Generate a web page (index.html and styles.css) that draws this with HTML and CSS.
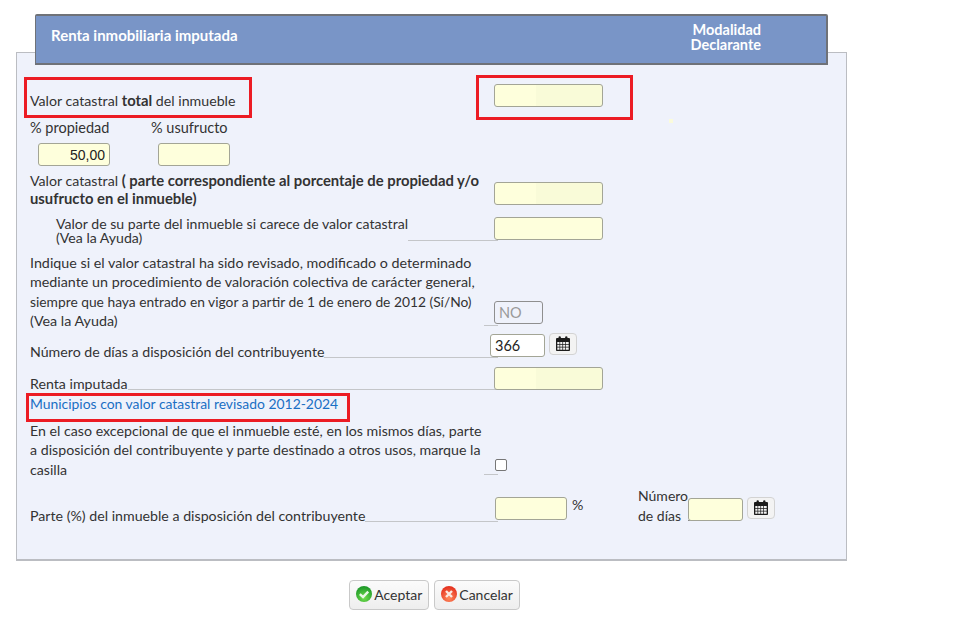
FILE: index.html
```html
<!DOCTYPE html>
<html lang="es">
<head>
<meta charset="utf-8">
<title>Renta inmobiliaria imputada</title>
<link rel="stylesheet" href="styles.css">
</head>
<body>
<div class="page">
  <header class="header">
    <h1 class="title">Renta inmobiliaria imputada</h1>
    <div class="mode">Modalidad<br>Declarante</div>
  </header>
  <main class="panel">
    <div class="mark mark-total"></div>
    <div class="mark mark-input"></div>
    <div class="mark mark-link"></div>
    <div class="speck"></div>

    <div class="row r1">
      <div class="cell"><label class="label">Valor catastral <b>total</b> del inmueble</label></div>
      <input class="inp wide tint top" type="text">
    </div>

    <div class="pair-labels">
      <span class="pair-a">% propiedad</span>
      <span>% usufructo</span>
    </div>
    <div class="pair-inputs">
      <input class="inp short num" type="text" value="50,00">
      <input class="inp short" type="text">
    </div>

    <div class="row r4">
      <div class="cell"><label class="label tight18">Valor catastral <b>( parte correspondiente al porcentaje de propiedad y/o<br>usufructo en el inmueble)</b></label></div>
      <input class="inp wide tint r4-inp" type="text">
    </div>

    <div class="row r5">
      <div class="cell cell-top">
        <label class="label indent tight14">Valor de su parte del inmueble si carece de valor catastral<br>(Vea la Ayuda)</label>
        <span class="lead lead-r5"></span>
      </div>
      <input class="inp wide top" type="text">
    </div>

    <div class="row r6">
      <div class="cell">
        <label class="label para">Indique si el valor catastral ha sido revisado, modificado o determinado<br>mediante un procedimiento de valoración colectiva de carácter general,<br><span class="dated">siempre que haya entrado en vigor a partir de 1 de enero de 2012 (Sí/No)</span><br>(Vea la Ayuda)</label>
        <span class="lead"></span>
      </div>
      <input class="inp no r6-inp" type="text" value="NO">
    </div>

    <div class="row r7">
      <div class="cell">
        <label class="label">Número de días a disposición del contribuyente</label>
        <span class="lead"></span>
      </div>
      <input class="inp days top" type="text" value="366">
      <button class="cal cal-r7" type="button" aria-label="Calendario">
        <svg viewBox="0 0 16 16" width="16" height="16"><use href="#cal-icon"/></svg>
      </button>
    </div>

    <div class="row r8">
      <div class="cell">
        <label class="label">Renta imputada</label>
        <span class="lead"></span>
      </div>
      <input class="inp wide tint top" type="text">
    </div>

    <a class="link" href="#">Municipios con valor catastral revisado 2012-2024</a>

    <div class="row r9">
      <div class="cell">
        <label class="label para">En el caso excepcional de que el inmueble esté, en los mismos días, parte<br>a disposición del contribuyente y parte destinado a otros usos, marque la<br>casilla</label>
        <span class="lead"></span>
      </div>
      <input class="check" type="checkbox">
    </div>

    <div class="row r10">
      <div class="cell">
        <label class="label">Parte (%) del inmueble a disposición del contribuyente</label>
        <span class="lead"></span>
      </div>
      <input class="inp pct r10-inp" type="text">
      <span class="pct-sign">%</span>
      <label class="label dias-label">Número<br>de días</label>
      <span class="stub"></span>
      <input class="inp dias r10-dias" type="text">
      <button class="cal cal-r10" type="button" aria-label="Calendario">
        <svg viewBox="0 0 16 16" width="16" height="16"><use href="#cal-icon"/></svg>
      </button>
    </div>
  </main>
  <footer class="actions">
    <button class="btn" type="button">
      <svg viewBox="0 0 16 16" width="16" height="16">
        <defs><radialGradient id="g" cx="50%" cy="75%" r="70%"><stop offset="0" stop-color="#6fdc4a"/><stop offset="1" stop-color="#1f9a2a"/></radialGradient></defs>
        <circle cx="8" cy="8" r="8" fill="url(#g)"/>
        <path d="M3.800 8.200 7 11l5.200-5.400" fill="none" stroke="#e9f7e4" stroke-width="2.400"/>
      </svg>Aceptar
    </button>
    <button class="btn" type="button">
      <svg viewBox="0 0 16 16" width="16" height="16">
        <defs><radialGradient id="r" cx="50%" cy="75%" r="70%"><stop offset="0" stop-color="#ff8a5c"/><stop offset="1" stop-color="#e5321f"/></radialGradient></defs>
        <circle cx="8" cy="8" r="8" fill="url(#r)"/>
        <path d="M5 5l6 6M11 5l-6 6" fill="none" stroke="#fbe9e2" stroke-width="2.400"/>
      </svg>Cancelar
    </button>
  </footer>
</div>
<svg class="defs" width="0" height="0">
  <symbol id="cal-icon" viewBox="0 0 16 16">
    <path fill="#1c1c1c" d="M1 3.200C1 2.600 1.500 2 2.200 2H3.500V1.500a1.200 1.200 0 0 1 2.400 0V2h4.200V1.500a1.200 1.200 0 0 1 2.400 0V2h1.300c.7 0 1.200.6 1.200 1.200V14c0 .6-.5 1-1.200 1H2.200C1.500 15 1 14.600 1 14z"/>
    <path fill="#f2f2f2" d="M2.300 6h2.200v2H2.300zM5.200 6h2.200v2H5.200zM8.100 6h2.200v2H8.100zM11 6h2.700v2H11zM2.300 8.700h2.200v2H2.300zM5.200 8.700h2.200v2H5.200zM8.100 8.700h2.200v2H8.100zM11 8.700h2.700v2H11zM2.300 11.400h2.200v2.300H2.300zM5.200 11.400h2.200v2.300H5.200zM8.100 11.400h2.200v2.300H8.100zM11 11.400h2.700v2.300H11z"/>
  </symbol>
</svg>
</body>
</html>
```

FILE: styles.css
```css
* { box-sizing: border-box; }
html, body { margin: 0; background: #fff; }
body { font-family: Lato, "Noto Sans", sans-serif; font-size: 14.200px; color: #333; }
b { font-size: 14.800px; line-height: 1; }
.defs { position: absolute; }

.page { width: 847px; padding: 14px 0 0 16px; }

.header {
  position: relative; z-index: 1;
  display: flex; justify-content: space-between; align-items: center;
  width: 793px; height: 51px; margin: 0 0 -13px 19px;
  padding: 0 65px 0 15px;
  background: #7995c7;
  border: 1px solid #6f7278; border-width: 2px 2px 2px 1px;
  border-radius: 2px 2px 0 0;
  color: #fff; font-weight: 700;
}
.title { margin: 0 0 9px; font-size: 15px; font-weight: 700; }
.mode { margin-bottom: 6px; font-size: 14.500px; line-height: 15px; text-align: right; }

.panel {
  position: relative;
  height: 509px; padding: 31px 0 0 13px;
  background: #eff2fb;
  border: 1px solid #bbbdc2;
  border-bottom-width: 2px;
}

.mark { position: absolute; border: 3px solid #ec1c24; }
.mark-total { left: 7px; top: 24px; width: 228px; height: 41px; }
.mark-input { left: 459px; top: 22px; width: 157px; height: 45px; }
.mark-link { left: 9px; top: 340px; width: 324px; height: 29px; }
.speck { position: absolute; left: 652px; top: 66px; width: 4px; height: 4px; background: #fafbdc; }

.row { display: flex; align-items: flex-end; }
.cell { display: flex; align-items: flex-end; flex: none; width: 468px; }
.cell-top { align-items: flex-start; }
.label { display: block; line-height: 20px; white-space: nowrap; }
.lead { flex: 1; margin-bottom: 4px; min-width: 0; border-bottom: 1px solid #c4c6c9; }
.lead-r5 { height: 24px; margin-bottom: 0; }

.inp {
  flex: none; height: 23px; margin: 0; padding: 0 4px;
  border: 1px solid #a3a596; border-radius: 3px;
  background: #feffdc;
  font: 14px "Liberation Sans", sans-serif; color: #222;
  outline: none;
}
.wide { width: 109px; margin-left: -4px; }
.tint { background: linear-gradient(90deg, #feffdc 38%, #f9fbd8 38%); }
.top { align-self: flex-start; }
.short { width: 72px; }
.num { text-align: right; }
.no { width: 49px; margin-left: -4px; background: #eff2fb; border-color: #8f8f8f; font-family: Lato, sans-serif; font-size: 14.500px; color: #999; }
.days { width: 55px; margin-left: -8px; background: #fff; font-family: Lato, sans-serif; font-size: 14.500px; }
.pct { width: 72px; margin-left: -3px; }
.dias { width: 55px; }

.r1 { height: 27px; }

.pair-labels { display: flex; margin-top: 7px; font-size: 14.500px; line-height: 20px; }
.pair-a { width: 121px; }
.pair-inputs { display: flex; gap: 48px; margin: 5px 0 0 8px; }

.r4 { margin-top: 6px; align-items: flex-start; }
.tight18 { line-height: 18px; width: 468px; }
.r4-inp { margin-top: 10px; }

.r5 { margin-top: 9px; align-items: flex-start; }
.indent { margin-left: 26px; }
.tight14 { font-size: 14.100px; line-height: 14px; }

.para { width: 454px; flex: none; line-height: 19.300px; }
.r6 .para { font-size: 14.300px; }
.dated { font-size: 13.800px; }

.r6 { margin-top: 8px; }
.r6-inp { margin-bottom: 6px; }

.r7 { margin-top: 4px; height: 28px; }
.cal {
  flex: none; display: flex; align-items: center; justify-content: center;
  width: 28px; height: 22px; padding: 0;
  background: #f3f3f3; border: 1px solid #d3d3d3; border-radius: 4px;
}
.cal-r7 { align-self: flex-start; margin: -1px 0 0 4px; }

.r8 { margin-top: 5px; height: 27px; }

.link { display: block; width: max-content; font-size: 13.900px; line-height: 20px; color: #1a6fc4; text-decoration: none; }

.r9 { margin-top: 7px; }
.check {
  flex: none; appearance: none; width: 12px; height: 12px; margin: 0 0 8px -3px;
  background: #fff; border: 1px solid #777; border-radius: 2px;
}

.r10 { margin-top: 7px; }
.r10-inp { margin-bottom: 6px; }
.pct-sign { align-self: flex-start; margin: 9px 0 0 5px; width: 10px; line-height: 20px; }
.dias-label { margin-left: 56px; width: 50px; font-size: 14px; }
.stub { width: 9px; margin-bottom: 5px; border-bottom: 1px solid #8a8a8a; }
.r10-dias { margin: 0 0 5px -9px; }
.cal-r10 { margin: 0 0 7px 4px; }

.actions { display: flex; justify-content: center; gap: 5px; margin-top: 19px; padding-left: 6px; }
.btn {
  display: flex; align-items: center; gap: 2px;
  height: 30px; padding: 0 6px 2px;
  background: linear-gradient(#fbfbfb, #eeeeee);
  border: 1px solid #c9c9c9; border-radius: 4px;
  font: 14px Lato, sans-serif; color: #333;
}
```
